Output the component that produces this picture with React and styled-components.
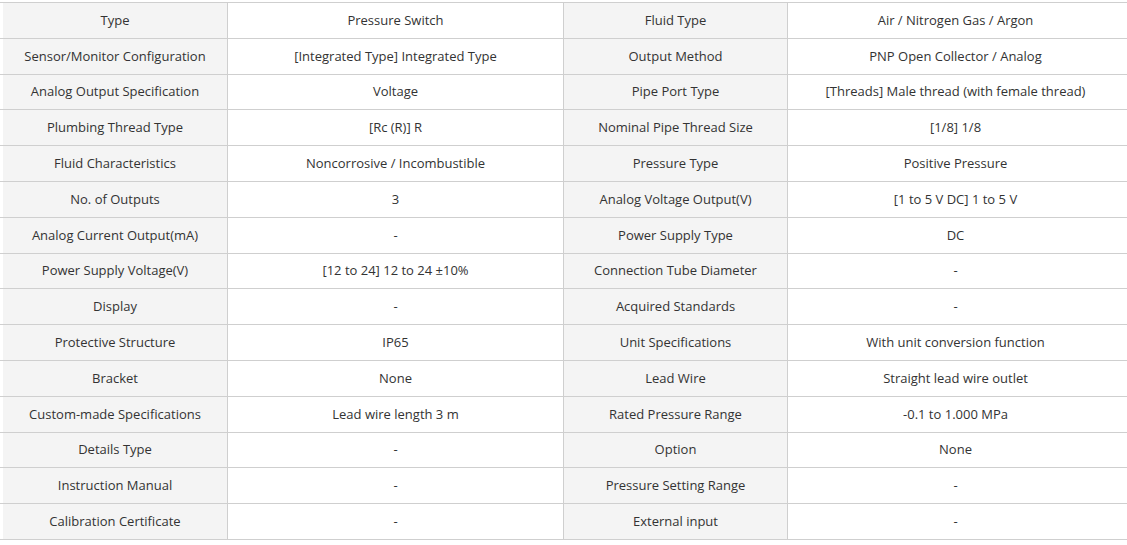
import React from "react";
import styled, { createGlobalStyle } from "styled-components";

const Global = createGlobalStyle`
  html, body { margin: 0; padding: 0; background: #fff; }
  body { font-family: "Open Sans", "Noto Sans", sans-serif; }
`;

const Table = styled.div`
  margin-top: 2px;
  width: 1127px;
  border-top: 1px solid #cfcfcf;
  display: grid;
  grid-auto-rows: calc(537px / 15);
`;

const Row = styled.div`
  display: grid;
  grid-template-columns: 3px 225px 336px 224px 335px 4px;
`;

const Cell = styled.div`
  display: flex;
  align-items: center;
  justify-content: center;
  text-align: center;
  font-size: 13px;
  color: #333;
  padding-bottom: 1px;
  border-bottom: 1px solid #cfcfcf;
  border-right: ${(p) => (p.$last ? "none" : "1px solid #cfcfcf")};
  background: ${(p) => (p.$head ? "#f4f4f4" : "#fff")};
  box-sizing: border-box;
  white-space: nowrap;
`;

const Gutter = styled.div`
  border-bottom: 1px solid #cfcfcf;
`;

const rows = [
  ["Type", "Pressure Switch", "Fluid Type", "Air / Nitrogen Gas / Argon"],
  ["Sensor/Monitor Configuration", "[Integrated Type] Integrated Type", "Output Method", "PNP Open Collector / Analog"],
  ["Analog Output Specification", "Voltage", "Pipe Port Type", "[Threads] Male thread (with female thread)"],
  ["Plumbing Thread Type", "[Rc (R)] R", "Nominal Pipe Thread Size", "[1/8] 1/8"],
  ["Fluid Characteristics", "Noncorrosive / Incombustible", "Pressure Type", "Positive Pressure"],
  ["No. of Outputs", "3", "Analog Voltage Output(V)", "[1 to 5 V DC] 1 to 5 V"],
  ["Analog Current Output(mA)", "-", "Power Supply Type", "DC"],
  ["Power Supply Voltage(V)", "[12 to 24] 12 to 24 ±10%", "Connection Tube Diameter", "-"],
  ["Display", "-", "Acquired Standards", "-"],
  ["Protective Structure", "IP65", "Unit Specifications", "With unit conversion function"],
  ["Bracket", "None", "Lead Wire", "Straight lead wire outlet"],
  ["Custom-made Specifications", "Lead wire length 3 m", "Rated Pressure Range", "-0.1 to 1.000 MPa"],
  ["Details Type", "-", "Option", "None"],
  ["Instruction Manual", "-", "Pressure Setting Range", "-"],
  ["Calibration Certificate", "-", "External input", "-"],
];

export default function App() {
  return (
    <>
      <Global />
      <Table>
        {rows.map((r, i) => (
          <Row key={i}>
            <Gutter />
            <Cell $head>{r[0]}</Cell>
            <Cell>{r[1]}</Cell>
            <Cell $head>{r[2]}</Cell>
            <Cell $last>{r[3]}</Cell>
            <Gutter />
          </Row>
        ))}
      </Table>
    </>
  );
}
